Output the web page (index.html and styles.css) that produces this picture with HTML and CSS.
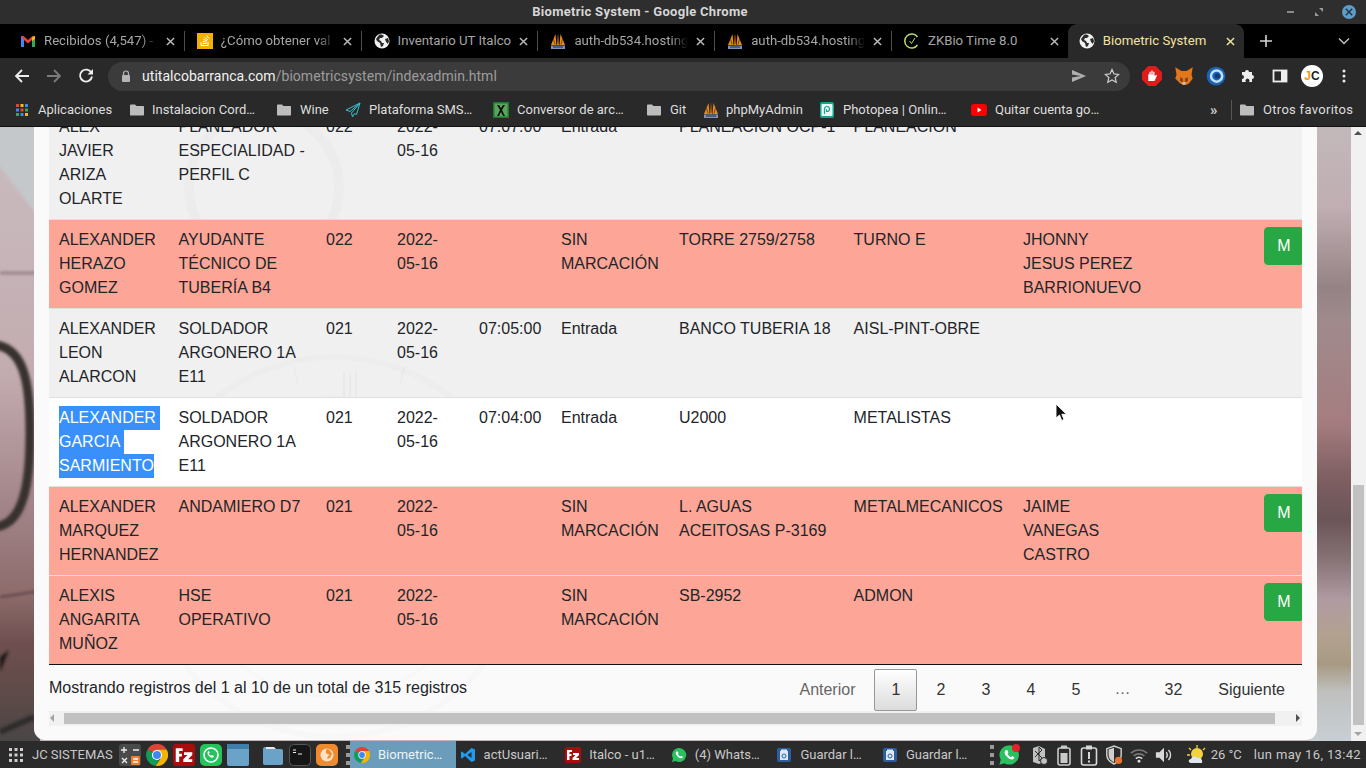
FILE: index.html
```html
<!DOCTYPE html>
<html lang="es">
<head>
    <meta charset="UTF-8">
    <title>Biometric System</title>
    <link rel="stylesheet" href="styles.css">
</head>
<body>
    <!-- iconos reutilizados -->
    <svg class="oculto" width="0" height="0">
        <symbol id="i-globo" viewBox="0 0 16 16"><circle cx="8" cy="8" r="7.5" fill="#f1f1f1"/><path d="M5 2c2-1 4 0 5 1L8 5 6 5 5 7l2 1 1 2 2 0-1 3-2 1-1-4-3-2-1-2zM11 6l3-1 1 3-1 3-2-2z" fill="#2a2a2a"/></symbol>
        <symbol id="i-cerrar" viewBox="0 0 10 10"><path d="M1 1l8 8M9 1l-8 8" stroke="currentColor" stroke-width="1.6" fill="none"/></symbol>
        <symbol id="i-velas" viewBox="0 0 16 16"><path d="M1 12L5.500 1l1 11zM7 12L8 .500 9 12zM9.500 12l1-11L15 12z" fill="#ec8a17"/><path d="M3.500 6L5 11.500M12.500 6L11 11.500M8 3v8" stroke="#5c3a12" stroke-width=".8"/><path d="M1 12.500h14V16H1z" fill="#7f93bd"/><path d="M3 14h10" stroke="#2c3a5c" stroke-width="1.200"/></symbol>
        <symbol id="i-carpeta" viewBox="0 0 16 16"><path d="M1 3.500C1 3 1.400 2.500 2 2.500h4l1.500 1.500H14c.6 0 1 .4 1 1v7.500c0 .6-.4 1-1 1H2c-.6 0-1-.4-1-1z" fill="#bdbdbd"/></symbol>
        <symbol id="i-chrome" viewBox="0 0 16 16"><path d="M8 8L1.100 4A8 8 0 0 1 15 4H8z" fill="#db4437"/><path d="M8 8l-6.900-4A8 8 0 0 0 7 15.900L11 9z" fill="#0f9d58"/><path d="M8 4h7A8 8 0 0 1 7 15.900L11 10z" fill="#f4b400"/><circle cx="8" cy="8" r="3.700" fill="#fff"/><circle cx="8" cy="8" r="2.900" fill="#4285f4"/></symbol>
        <symbol id="i-filezilla" viewBox="0 0 16 16"><rect width="16" height="16" rx="2" fill="#a80c0c"/><path d="M2 3h5v2H4.500v2H6.500v2H4.500v4H2zM8 6h6v2l-3 3h3v2H7.500v-2l3-3H8z" fill="#fff"/></symbol>
        <symbol id="i-whatsapp" viewBox="0 0 16 16"><path d="M8 1a7 7 0 0 0-6 10.500L1 15l3.600-1A7 7 0 1 0 8 1z" fill="#29c15f"/><path d="M5.500 4.500c-1 1-1 2.500.5 4.300s3 2.500 4.200 2.500c1 0 1.800-1 1.600-1.600L10.300 8.800 9.500 9.600C8.500 9.200 7.300 8 6.900 7L7.600 6.200 6.700 4.400z" fill="#fff"/></symbol>
        <symbol id="i-guardar" viewBox="0 0 16 16"><rect x="1" y="1" width="14" height="14" rx="2" fill="#2d5f9e"/><rect x="4" y="4" width="8" height="9" fill="#dfe8f2"/><rect x="5" y="2.500" width="6" height="1.500" fill="#dfe8f2"/><circle cx="8" cy="9" r="2" fill="none" stroke="#2d5f9e"/></symbol>
    </svg>

    <header class="titulo-ventana">
        <span class="titulo-texto">Biometric System - Google Chrome</span>
        <div class="botones-ventana">
            <span class="btn-min"></span>
            <svg class="btn-max" width="10" height="10" viewBox="0 0 10 10"><path d="M5 1h4v4zM5 9H1V5z" fill="#9a9a9a"/></svg>
            <span class="btn-cerrar"><svg width="8" height="8"><use href="#i-cerrar"/></svg></span>
        </div>
    </header>

    <nav class="pestanas">
        <div class="pestana">
            <svg class="icono" viewBox="0 0 16 16"><path d="M1 3h2.500L8 7l4.500-4H15v11h-3V7L8 10.500 4 7v7H1z" fill="#ea4335"/><path d="M1 3v11h3V7z" fill="#4285f4"/><path d="M15 3v11h-3V7z" fill="#34a853"/><path d="M12 4.500L15 3v3l-3 2z" fill="#fbbc05"/></svg>
            <span class="pestana-texto">Recibidos (4,547) - j</span>
            <svg class="pestana-x"><use href="#i-cerrar"/></svg>
        </div>
        <div class="pestana">
            <svg class="icono" viewBox="0 0 16 16"><rect width="16" height="16" fill="#f2b100"/><path d="M4 9v3.500h7V9M5.500 10.500h4M5.700 8.500l4 .6M6.300 6.500l3.800 1.200M7.500 4.500l3.300 2.200M9.500 2.500l2.500 3" stroke="#fff" stroke-width="1" fill="none"/></svg>
            <span class="pestana-texto">¿Cómo obtener val</span>
            <svg class="pestana-x"><use href="#i-cerrar"/></svg>
        </div>
        <div class="pestana">
            <svg class="icono"><use href="#i-globo"/></svg>
            <span class="pestana-texto pestana-corta">Inventario UT Italco</span>
            <svg class="pestana-x"><use href="#i-cerrar"/></svg>
        </div>
        <div class="pestana">
            <svg class="icono"><use href="#i-velas"/></svg>
            <span class="pestana-texto">auth-db534.hosting</span>
            <svg class="pestana-x"><use href="#i-cerrar"/></svg>
        </div>
        <div class="pestana">
            <svg class="icono"><use href="#i-velas"/></svg>
            <span class="pestana-texto">auth-db534.hosting</span>
            <svg class="pestana-x"><use href="#i-cerrar"/></svg>
        </div>
        <div class="pestana pestana-sin-linea">
            <svg class="icono" viewBox="0 0 16 16"><path d="M13.500 4A7 7 0 1 0 13.500 12" fill="none" stroke="#b5d96b" stroke-width="1.500"/><path d="M5.500 8l2 2.500L11 5" fill="none" stroke="#b5d96b" stroke-width="1"/></svg>
            <span class="pestana-texto pestana-corta">ZKBio Time 8.0</span>
            <svg class="pestana-x"><use href="#i-cerrar"/></svg>
        </div>
        <div class="pestana pestana-activa">
            <svg class="icono"><use href="#i-globo"/></svg>
            <span class="pestana-texto pestana-corta">Biometric System</span>
            <svg class="pestana-x"><use href="#i-cerrar"/></svg>
        </div>
        <svg class="pestana-mas" viewBox="0 0 12 12"><path d="M6 0v12M0 6h12" stroke="#d6d6d6" stroke-width="1.600"/></svg>
        <svg class="pestana-lista" viewBox="0 0 12 8"><path d="M1 1.500l5 5 5-5" stroke="#c4c4c4" stroke-width="1.400" fill="none"/></svg>
    </nav>

    <div class="barra-navegacion">
        <svg class="nav-icono" viewBox="0 0 16 16"><path d="M15 8H2M8 2L2 8l6 6" stroke="#ededed" stroke-width="1.800" fill="none"/></svg>
        <svg class="nav-icono" viewBox="0 0 16 16"><path d="M1 8h13M8 2l6 6-6 6" stroke="#7b7b7b" stroke-width="1.800" fill="none"/></svg>
        <svg class="nav-icono" viewBox="0 0 16 16"><path d="M13.500 5A6 6 0 1 0 14 8.500" stroke="#ededed" stroke-width="1.800" fill="none"/><path d="M15 1v5.500H9.500z" fill="#ededed"/></svg>
        <div class="omnibox">
            <svg class="candado" viewBox="0 0 10 12"><path d="M2.500 5V3.500a2.500 2.500 0 0 1 5 0V5" stroke="#b5b5b5" fill="none" stroke-width="1.200"/><rect x="1" y="5" width="8" height="7" rx="1" fill="#b5b5b5"/></svg>
            <span class="url"><b class="url-dominio">utitalcobarranca.com</b>/biometricsystem/indexadmin.html</span>
            <svg class="omni-enviar" viewBox="0 0 16 14"><path d="M1 1l14 6-14 6 0-4.500 9-1.500-9-1.500z" fill="#b0b0b0"/></svg>
            <svg class="omni-estrella" viewBox="0 0 16 16"><path d="M8 1.500l2 4.400 4.700.5-3.500 3.200 1 4.700L8 11.900l-4.200 2.400 1-4.700L1.300 6.400 6 5.900z" fill="none" stroke="#c8c8c8" stroke-width="1.300"/></svg>
        </div>
        <div class="extensiones">
            <svg class="ext ext-grande" viewBox="0 0 16 16"><path d="M5 0h6l5 5v6l-5 5H5l-5-5V5z" fill="#e01b1b"/><path d="M5 12V6.500h1V4.500h1V7h.5V3.500h1V7H9V4.500h1V8l1.500-1 .5.500-2 4.500z" fill="#fff"/></svg>
            <svg class="ext ext-grande" viewBox="0 0 16 16"><path d="M1 1l5 3h4l5-3-1 6 1 3-3 4-2 1H7l-2-1-4-4 1-3z" fill="#e2761b"/><path d="M5 9l2 1v3L5 12zM11 9l-2 1v3l2-1z" fill="#763d16"/><path d="M6.500 13h3L9 15H7z" fill="#d7c1b3"/></svg>
            <svg class="ext ext-grande" viewBox="0 0 16 16"><circle cx="8" cy="8" r="7.500" fill="#1c62b5"/><circle cx="8.500" cy="8" r="4.500" fill="none" stroke="#bfe0f6" stroke-width="2"/><circle cx="9" cy="8" r="2" fill="#123a70"/></svg>
            <svg class="ext" viewBox="0 0 16 16"><path d="M2 4h3a2 2 0 1 1 4 0h3v3a2 2 0 1 1 0 4v3H9a2 2 0 1 0-3 0H2v-3a2 2 0 1 0 0-4z" fill="#ededed"/></svg>
            <svg class="ext" viewBox="0 0 16 16"><rect x="1.500" y="2.500" width="13" height="11" fill="none" stroke="#ededed" stroke-width="1.800"/><rect x="9" y="2.500" width="5.500" height="11" fill="#ededed"/></svg>
            <span class="avatar"><span class="avatar-j">J</span><span class="avatar-c">C</span></span>
            <svg class="ext" viewBox="0 0 16 16"><circle cx="8" cy="3" r="1.500" fill="#ededed"/><circle cx="8" cy="8" r="1.500" fill="#ededed"/><circle cx="8" cy="13" r="1.500" fill="#ededed"/></svg>
        </div>
    </div>

    <div class="marcadores">
        <div class="marcador">
            <svg class="icono" viewBox="0 0 16 16"><path d="M2 2h3v3H2z" fill="#ea4335"/><path d="M6.500 2h3v3h-3z" fill="#fbbc05"/><path d="M11 2h3v3h-3z" fill="#4285f4"/><path d="M2 6.500h3v3H2z" fill="#4285f4"/><path d="M6.500 6.500h3v3h-3z" fill="#ea4335"/><path d="M11 6.500h3v3h-3z" fill="#34a853"/><path d="M2 11h3v3H2z" fill="#34a853"/><path d="M6.500 11h3v3h-3z" fill="#4285f4"/><path d="M11 11h3v3h-3z" fill="#fbbc05"/></svg>
            <span>Aplicaciones</span>
        </div>
        <div class="marcador"><svg class="icono"><use href="#i-carpeta"/></svg><span>Instalacion Cord…</span></div>
        <div class="marcador"><svg class="icono"><use href="#i-carpeta"/></svg><span>Wine</span></div>
        <div class="marcador">
            <svg class="icono" viewBox="0 0 16 16"><path d="M15 1L1 8l4 1.500L15 1 6.500 11l1 4 2-3.500 2 1z" fill="none" stroke="#38c0cc" stroke-width="1"/></svg>
            <span>Plataforma SMS…</span>
        </div>
        <div class="marcador">
            <svg class="icono" viewBox="0 0 16 16"><rect width="16" height="16" fill="#1e7a30"/><rect x="1.500" y="1.500" width="13" height="13" fill="#5ba55a"/><path d="M4 3l3 5-3 6h2l2-4 2 4h2L9 8l3-5h-2L8 6 6 3z" fill="#111"/></svg>
            <span>Conversor de arc…</span>
        </div>
        <div class="marcador"><svg class="icono"><use href="#i-carpeta"/></svg><span>Git</span></div>
        <div class="marcador"><svg class="icono"><use href="#i-velas"/></svg><span>phpMyAdmin</span></div>
        <div class="marcador">
            <svg class="icono" viewBox="0 0 16 16"><rect x="1" width="14" height="16" rx="2" fill="#19a38c"/><rect x="2.500" y="2" width="11" height="12" rx="1" fill="#e9f7f5"/><path d="M5.500 12V7a2.500 2.500 0 1 1 2.500 2.500M7.500 10V7.300" fill="none" stroke="#19a38c" stroke-width="1.200"/></svg>
            <span>Photopea | Onlin…</span>
        </div>
        <div class="marcador">
            <svg class="icono" viewBox="0 0 16 16"><rect y="2" width="16" height="12" rx="3" fill="#f00"/><path d="M6.500 5.500v5l4-2.500z" fill="#fff"/></svg>
            <span>Quitar cuenta go…</span>
        </div>
        <span class="marcador-mas">»</span>
        <span class="marcador-linea"></span>
        <div class="marcador marcador-otros"><svg class="icono"><use href="#i-carpeta"/></svg><span>Otros favoritos</span></div>
    </div>

    <main class="pagina">
        <svg class="fondo" width="1366" height="614" viewBox="0 0 1366 614">
            <defs>
                <linearGradient id="g-izq" x1="0" y1="0" x2="0" y2="1">
                    <stop offset="0" stop-color="#c9bcc0"/>
                    <stop offset=".4" stop-color="#c3acb0"/>
                    <stop offset=".63" stop-color="#a08286"/>
                    <stop offset=".76" stop-color="#8e6c6c"/>
                    <stop offset=".84" stop-color="#6f4f4f"/>
                    <stop offset=".93" stop-color="#5d4a48"/>
                    <stop offset="1" stop-color="#4a4646"/>
                </linearGradient>
                <linearGradient id="g-der" x1="0" y1="0" x2="0" y2="1">
                    <stop offset="0" stop-color="#c2b8ba"/>
                    <stop offset=".13" stop-color="#c0aeb2"/>
                    <stop offset=".26" stop-color="#958386"/>
                    <stop offset=".32" stop-color="#a08a8c"/>
                    <stop offset=".48" stop-color="#a57d80"/>
                    <stop offset=".57" stop-color="#7f5f62"/>
                    <stop offset=".64" stop-color="#6b5558"/>
                    <stop offset=".7" stop-color="#857074"/>
                    <stop offset=".77" stop-color="#b09ba2"/>
                    <stop offset=".83" stop-color="#b3a18f"/>
                    <stop offset=".875" stop-color="#a79a83"/>
                    <stop offset=".92" stop-color="#bfc0bf"/>
                    <stop offset="1" stop-color="#c8cfd4"/>
                </linearGradient>
                <filter id="borroso"><feGaussianBlur stdDeviation="1.500"/></filter>
            </defs>
            <rect x="0" y="0" width="40" height="614" fill="url(#g-izq)"/>
            <rect x="1310" y="0" width="56" height="614" fill="url(#g-der)"/>
            <g filter="url(#borroso)">
                <path d="M-6 0H40V92L-6 32z" fill="#c4c8cb"/>
                <path d="M0 146H40" stroke="#8f7a7f" stroke-width="2.500"/>
                <path d="M-4 218C26 222 30 262 30 306C30 356 24 396 -4 400" fill="none" stroke="#38302f" stroke-width="9"/>
                <path d="M0 470L40 464" stroke="#5a4142" stroke-width="2"/>
                <path d="M0 545L9 523 0 530z" fill="#1d1515"/>
                <path d="M0 605L34 590" stroke="#2f2b2b" stroke-width="6"/>
            </g>
        </svg>

        <section class="tarjeta">
            <svg class="reloj" width="1283" height="613" viewBox="0 0 1283 613">
                <circle cx="300" cy="420" r="190" fill="none" stroke="#000" stroke-opacity=".012" stroke-width="6"/>
                <circle cx="300" cy="420" r="150" fill="none" stroke="#000" stroke-opacity=".01" stroke-width="3"/>
                <circle cx="230" cy="60" r="75" fill="none" stroke="#000" stroke-opacity=".015" stroke-width="10"/>
                <path d="M310 245v28M316 245v28M322 245v28M260 240l4 18M370 240l-4 18" stroke="#000" stroke-opacity=".025" stroke-width="2"/>
            </svg>

            <div class="tabla-marco">
                <table class="tabla">
                    <colgroup>
                        <col class="c-nombre"><col class="c-cargo"><col class="c-turno"><col class="c-fecha"><col class="c-hora">
                        <col class="c-tipo"><col class="c-lugar"><col class="c-area"><col class="c-jefe"><col class="c-vacio"><col class="c-accion">
                    </colgroup>
                    <tbody>
                        <tr class="fila-par">
                            <td>ALEX JAVIER ARIZA OLARTE</td><td>PLANEADOR ESPECIALIDAD - PERFIL C</td><td>022</td><td>2022-05-16</td><td>07:07:00</td>
                            <td>Entrada</td><td class="sin-corte">PLANEACION OCP-1</td><td>PLANEACION</td><td></td><td></td><td></td>
                        </tr>
                        <tr class="fila-alerta">
                            <td>ALEXANDER HERAZO GOMEZ</td><td>AYUDANTE TÉCNICO DE TUBERÍA B4</td><td>022</td><td>2022-05-16</td><td></td>
                            <td>SIN MARCACIÓN</td><td>TORRE 2759/2758</td><td>TURNO E</td><td>JHONNY JESUS PEREZ BARRIONUEVO</td><td></td><td><button class="btn-m">M</button></td>
                        </tr>
                        <tr class="fila-par">
                            <td>ALEXANDER LEON ALARCON</td><td>SOLDADOR ARGONERO 1A E11</td><td>021</td><td>2022-05-16</td><td>07:05:00</td>
                            <td>Entrada</td><td>BANCO TUBERIA 18</td><td>AISL-PINT-OBRE</td><td></td><td></td><td></td>
                        </tr>
                        <tr class="fila-blanca">
                            <td><span class="seleccion">ALEXANDER</span><span class="seleccion">GARCIA</span><span class="seleccion sin-espacio">SARMIENTO</span></td><td>SOLDADOR ARGONERO 1A E11</td><td>021</td><td>2022-05-16</td><td>07:04:00</td>
                            <td>Entrada</td><td>U2000</td><td>METALISTAS</td><td></td><td></td><td></td>
                        </tr>
                        <tr class="fila-alerta">
                            <td>ALEXANDER MARQUEZ HERNANDEZ</td><td>ANDAMIERO D7</td><td>021</td><td>2022-05-16</td><td></td>
                            <td>SIN MARCACIÓN</td><td>L. AGUAS ACEITOSAS P-3169</td><td>METALMECANICOS</td><td>JAIME VANEGAS CASTRO</td><td></td><td><button class="btn-m">M</button></td>
                        </tr>
                        <tr class="fila-alerta">
                            <td>ALEXIS ANGARITA MUÑOZ</td><td>HSE OPERATIVO</td><td>021</td><td>2022-05-16</td><td></td>
                            <td>SIN MARCACIÓN</td><td>SB-2952</td><td>ADMON</td><td></td><td></td><td><button class="btn-m">M</button></td>
                        </tr>
                    </tbody>
                </table>
            </div>

            <div class="tabla-pie">
                <span class="info">Mostrando registros del 1 al 10 de un total de 315 registros</span>
                <div class="paginacion">
                    <a class="pag pag-apagado">Anterior</a>
                    <a class="pag pag-actual">1</a>
                    <a class="pag">2</a>
                    <a class="pag">3</a>
                    <a class="pag">4</a>
                    <a class="pag">5</a>
                    <span class="pag pag-apagado pag-puntos">…</span>
                    <a class="pag">32</a>
                    <a class="pag">Siguiente</a>
                </div>
            </div>

            <div class="scroll-h">
                <span class="flecha flecha-izq"></span>
                <span class="scroll-h-barra"></span>
                <span class="flecha flecha-der"></span>
            </div>
        </section>

        <aside class="scroll-v">
            <span class="flecha flecha-arriba"></span>
            <span class="scroll-v-barra"></span>
            <span class="flecha flecha-abajo"></span>
        </aside>

        <svg class="cursor" width="13" height="19" viewBox="0 0 13 19"><path d="M1 1v14l3.500-3 2.200 5.500 2.300-1-2.200-5.200H11.500z" fill="#111" stroke="#fff" stroke-width=".9"/></svg>
    </main>

    <footer class="tareas">
        <svg class="tareas-menu" viewBox="0 0 14 14"><g fill="#cfcfcf"><rect width="3" height="3"/><rect x="5.500" width="3" height="3"/><rect x="11" width="3" height="3"/><rect y="5.500" width="3" height="3"/><rect x="5.500" y="5.500" width="3" height="3"/><rect x="11" y="5.500" width="3" height="3"/><rect y="11" width="3" height="3"/><rect x="5.500" y="11" width="3" height="3"/><rect x="11" y="11" width="3" height="3"/></g></svg>
        <span class="tareas-nombre">JC SISTEMAS</span>
        <div class="lanzador">
            <svg class="lanza" viewBox="0 0 22 22"><rect width="22" height="22" rx="3" fill="#4a4a4a"/><rect x="12" y="12" width="9" height="9" rx="1" fill="#ef7f2c"/><path d="M5 3v6M2 6h6M14 6h6M3 14l5 5M8 14l-5 5" stroke="#eee" stroke-width="1.300"/><path d="M14 15h5M14 18h5" stroke="#fff" stroke-width="1.300"/></svg>
            <svg class="lanza" viewBox="0 0 16 16"><use href="#i-chrome"/></svg>
            <svg class="lanza" viewBox="0 0 16 16"><use href="#i-filezilla"/></svg>
            <svg class="lanza" viewBox="0 0 22 22"><rect width="22" height="22" rx="5" fill="#25c35c"/><circle cx="11" cy="11" r="7" fill="none" stroke="#fff" stroke-width="1.600"/><path d="M8 7.500c-1 1-.5 3 1 4.500s3.500 2.200 4.500 1.200l.5-1.200-2-1-.8.800c-1-.3-2-1.300-2.300-2.300l.8-.8-1-2z" fill="#fff"/></svg>
            <svg class="lanza" viewBox="0 0 22 22"><rect width="22" height="22" rx="2" fill="#6ba3c8"/><rect width="22" height="5" fill="#3f7ea8"/></svg>
            <svg class="lanza lanza-separada" viewBox="0 0 22 22"><path d="M1 5c0-1 .5-2 2-2h6l2 2h8c1.500 0 2 1 2 2v12c0 1-.5 2-2 2H3c-1.500 0-2-1-2-2z" fill="#6ba3c8"/><path d="M4 3h8l2 2H4z" fill="#e8e8e8"/></svg>
            <svg class="lanza" viewBox="0 0 22 22"><rect x=".5" y=".5" width="21" height="21" rx="4" fill="#161616" stroke="#555"/><path d="M4 6h3M4 8.500h3" stroke="#eee"/><path d="M9 10h4" stroke="#eee"/></svg>
            <svg class="lanza" viewBox="0 0 22 22"><rect width="22" height="22" rx="5" fill="#ef8a2e"/><circle cx="11" cy="11" r="6.500" fill="#fbe3c8"/><path d="M11 5c-2 2-1 4 0 5l3 1-2 1-1 3 3-1 2-4c-1-3-3-5-5-5z" fill="#ef8a2e"/></svg>
            <span class="lanza-puntos"></span>
        </div>
        <div class="lista-tareas">
            <div class="tarea tarea-activa"><svg class="icono"><use href="#i-chrome"/></svg><span>Biometric…</span></div>
            <div class="tarea"><svg class="icono" viewBox="0 0 16 16"><path d="M11.500 1L15 2.500v11L11.500 15 5 9 2 11.500 1 11V5l1-.5L5 7z" fill="#1f9cf0"/><path d="M11.500 5L7.500 8l4 3z" fill="#2c2c2c"/></svg><span>actUsuari…</span></div>
            <div class="tarea"><svg class="icono"><use href="#i-filezilla"/></svg><span>Italco - u1…</span></div>
            <div class="tarea"><svg class="icono"><use href="#i-whatsapp"/></svg><span>(4) Whats…</span></div>
            <div class="tarea"><svg class="icono"><use href="#i-guardar"/></svg><span>Guardar l…</span></div>
            <div class="tarea"><svg class="icono"><use href="#i-guardar"/></svg><span>Guardar l…</span></div>
        </div>
        <div class="bandeja">
            <span class="lanza-puntos"></span>
            <span class="bandeja-wa"><svg width="22" height="22"><use href="#i-whatsapp"/></svg><span class="punto-rojo"></span></span>
            <svg class="tray" viewBox="0 0 18 22"><path d="M3 4l6-2 6 3v12l-6 3-6-2z" fill="#d0d0d0" opacity=".9"/><path d="M5 7l7 7-3 3V3l3 3-7 7" stroke="#2c2c2c" fill="none"/><circle cx="14" cy="17" r="3.500" fill="#c5c5c5" stroke="#2c2c2c"/></svg>
            <svg class="tray" viewBox="0 0 18 22"><rect x="3" y="4" width="12" height="17" rx="2" fill="none" stroke="#c9c9c9" stroke-width="1.600"/><rect x="6" y="1.500" width="6" height="3" fill="#c9c9c9"/><rect x="5.500" y="9" width="7" height="10" fill="#c9c9c9"/></svg>
            <svg class="tray" viewBox="0 0 18 22"><rect x="1.500" y="4" width="15" height="17" rx="2" fill="none" stroke="#d8d8d8" stroke-width="1.600"/><rect x="6" y="1.500" width="6" height="4" fill="#d8d8d8"/><path d="M9 8v7M9 16.500v2" stroke="#d8d8d8" stroke-width="2"/></svg>
            <svg class="tray" viewBox="0 0 20 22"><path d="M10 1l8 3v7c0 5-4 8-8 10-4-2-8-5-8-10V4z" fill="none" stroke="#d0d0d0" stroke-width="1.600"/><path d="M10 3v16c-3-1.500-6-4-6-8V5z" fill="#d0d0d0"/><circle cx="15" cy="17" r="4" fill="#e9742b"/></svg>
            <svg class="tray" viewBox="0 0 20 22"><path d="M1 9a13 13 0 0 1 18 0M4 12a9 9 0 0 1 12 0" stroke="#777" stroke-width="1.800" fill="none"/><path d="M6.500 15a5 5 0 0 1 7 0" stroke="#ddd" stroke-width="1.800" fill="none"/><circle cx="10" cy="18" r="1.600" fill="#ddd"/></svg>
            <svg class="tray" viewBox="0 0 20 22"><path d="M1 8h4l5-5v16l-5-5H1z" fill="#d8d8d8"/><path d="M12.500 8c1.500 1.500 1.500 4.500 0 6M15 5.500c3 3 3 8 0 11" stroke="#d8d8d8" stroke-width="1.600" fill="none"/></svg>
            <svg class="clima" viewBox="0 0 20 20"><circle cx="10" cy="9" r="6" fill="#f3d23e"/><path d="M10 0v3M2 3l2 2M18 3l-2 2M0 10h3" stroke="#f3d23e" stroke-width="1.300"/><path d="M4 18c-3 0-3-4 0-4 1-3 5-3 6-1 3-1 6 1 5 5z" fill="#dfe6ec"/></svg>
            <span class="temp">26 °C</span>
            <span class="reloj-texto">lun may 16, 13:42</span>
        </div>
    </footer>
</body>
</html>
```

FILE: styles.css
```css
* {
    box-sizing: border-box;
}

html, body {
    margin: 0;
    height: 768px;
    overflow: hidden;
}

body {
    display: flex;
    flex-direction: column;
    background: #2a2a2a;
    font-family: "Liberation Sans", Arial, sans-serif;
    font-size: 16px;
    line-height: 24px;
    color: #212529;
}

.oculto {
    position: absolute;
}

.icono {
    width: 16px;
    height: 16px;
    flex: none;
}

/* Barra de titulo */
.titulo-ventana {
    height: 24px;
    display: flex;
    align-items: center;
    justify-content: center;
    background: #2e2e2e;
    position: relative;
    padding-right: 86px;
}

.titulo-texto {
    font: 700 13px/24px Roboto, sans-serif;
    letter-spacing: .3px;
    color: #d6d6d6;
}

.botones-ventana {
    position: absolute;
    right: 10px;
    top: 0;
    height: 24px;
    display: flex;
    align-items: center;
    gap: 18px;
}

.btn-min {
    width: 7px;
    height: 2px;
    margin-right: 2px;
    background: #8a8a8a;
}

.btn-cerrar {
    width: 14px;
    height: 14px;
    border-radius: 50%;
    background: #5c9cc9;
    color: #20303c;
    display: flex;
    align-items: center;
    justify-content: center;
}

/* Pestanas */
.pestanas {
    height: 34px;
    background: #000;
    display: flex;
    padding-left: 8px;
    font: 13px/34px Roboto, sans-serif;
    position: relative;
}

.pestana {
    width: 176.800px;
    flex: none;
    display: flex;
    align-items: center;
    padding: 0 9px 0 12px;
    gap: 8px;
    color: #a6a6a6;
    border-right: 1px solid #4d4d4d;
    border-image: linear-gradient(transparent 8px, #4d4d4d 8px, #4d4d4d 26px, transparent 26px) 1;
}

.pestana-sin-linea {
    border-right-color: transparent;
    border-image: none;
}

.pestana-texto {
    flex: 1;
    white-space: nowrap;
    overflow: hidden;
    font-size: 13.200px;
    -webkit-mask-image: linear-gradient(to right, #000 85%, transparent 100%);
    mask-image: linear-gradient(to right, #000 85%, transparent 100%);
}

.pestana-corta {
    -webkit-mask-image: none;
    mask-image: none;
}

.pestana-x {
    width: 9px;
    height: 9px;
    flex: none;
    color: #bcbcbc;
}

.pestana-activa {
    width: 176px;
    margin-left: -1px;
    background: #292929;
    border: 0;
    border-image: none;
    border-radius: 9px 9px 0 0;
    color: #f3e3a0;
    padding-left: 11px;
}

.pestana-activa .pestana-x {
    color: #f3e3a0;
}

.pestana-mas {
    width: 12px;
    height: 12px;
    margin: 11px 0 0 16px;
}

.pestana-lista {
    width: 12px;
    height: 8px;
    margin: 13px 0 0 66px;
}

/* Barra de navegacion */
.barra-navegacion {
    height: 36px;
    background: #292929;
    display: flex;
    align-items: center;
    padding: 0 0 0 14px;
}

.nav-icono {
    width: 16px;
    height: 16px;
    flex: none;
    margin-right: 16px;
}

.omnibox {
    width: 1022px;
    height: 29px;
    margin-left: -2px;
    border-radius: 15px;
    background: #3b3b3b;
    display: flex;
    align-items: center;
    padding: 0 10px 0 13px;
}

.candado {
    width: 10px;
    height: 12px;
    flex: none;
}

.url {
    margin-left: 11px;
    font: 14px/29px Roboto, sans-serif;
    letter-spacing: .04px;
    color: #9d9d9d;
    flex: 1;
}

.url-dominio {
    font-weight: 400;
    color: #f2f2f2;
}

.omni-enviar {
    width: 16px;
    height: 14px;
    margin-right: 17px;
}

.omni-estrella {
    width: 16px;
    height: 16px;
}

.extensiones {
    display: flex;
    align-items: center;
    gap: 16px;
    margin-left: 14px;
}

.ext {
    width: 16px;
    height: 16px;
    flex: none;
}

.ext-grande {
    width: 20px;
    height: 20px;
    margin: 0 -2px;
}

.avatar {
    width: 22px;
    height: 22px;
    margin: 0 -3px;
    border-radius: 50%;
    background: #fff;
    display: flex;
    align-items: center;
    justify-content: center;
    font: 700 12px/22px "Liberation Sans", sans-serif;
}

.avatar-j {
    color: #e8a11c;
}

.avatar-c {
    color: #222;
}

/* Marcadores */
.marcadores {
    height: 33px;
    background: #292929;
    border-bottom: 1px solid #111;
    display: flex;
    align-items: center;
    padding-left: 14px;
    font: 13px/32px Roboto, sans-serif;
    color: #dedede;
}

.marcador {
    display: flex;
    align-items: center;
    gap: 8px;
    flex: none;
    white-space: nowrap;
}

.marcador:nth-child(1) { width: 115px; }
.marcador:nth-child(2) { width: 147px; gap: 7px; }
.marcador:nth-child(3) { width: 69px; }
.marcador:nth-child(4) { width: 148px; }
.marcador:nth-child(5) { width: 153px; }
.marcador:nth-child(6) { width: 57px; }
.marcador:nth-child(7) { width: 116px; gap: 7px; }
.marcador:nth-child(8) { width: 152px; }
.marcador:nth-child(9) { width: 239px; }

.marcador-mas {
    width: 13px;
    font-size: 15px;
    font-weight: 700;
    color: #d0d0d0;
}

.marcador-linea {
    width: 1px;
    height: 20px;
    margin: 0 7px 0 8px;
    background: #555;
}

.marcador-otros {
    letter-spacing: .3px;
}

/* Contenido */
.pagina {
    position: relative;
    height: 614px;
    display: flex;
    overflow: hidden;
    background: #c4b2b5;
}

.fondo {
    position: absolute;
    left: 0;
    top: 0;
}

.cursor {
    position: absolute;
    left: 1055px;
    top: 276px;
}

.tarjeta {
    position: relative;
    width: 1283px;
    height: 613px;
    margin-left: 34px;
    padding: 0 15px;
    background: #fbfafa;
    border-radius: 0 0 11px 11px;
    overflow: hidden;
}

.reloj {
    position: absolute;
    left: 0;
    top: 0;
}

.tabla-marco {
    position: relative;
    overflow: hidden;
    height: 538px;
    border-bottom: 1px solid #111;
}

.tabla {
    table-layout: fixed;
    border-collapse: separate;
    border-spacing: 0;
    width: 1313px;
    margin-top: -21px;
}

.c-nombre { width: 119.500px; }
.c-cargo { width: 147.500px; }
.c-turno { width: 71px; }
.c-fecha { width: 82px; }
.c-hora { width: 82px; }
.c-tipo { width: 118px; }
.c-lugar { width: 174.600px; }
.c-area { width: 169.400px; }
.c-jefe { width: 138px; }
.c-vacio { width: 103px; }
.c-accion { width: 108px; }

.tabla td {
    padding: 8px 10px;
    border-top: 1px solid #e0e0e0;
    vertical-align: top;
}

.tabla .sin-corte {
    white-space: nowrap;
}

.fila-par {
    background: rgba(0, 0, 0, 0.04);
}

.fila-blanca {
    background: #fff;
}

.fila-alerta {
    background: #fda596;
}

.seleccion {
    display: block;
    width: fit-content;
    padding-right: 4px;
    background: #3a90fb;
    color: #fff;
}

.sin-espacio {
    padding-right: 0;
}

.btn-m {
    display: block;
    width: 40px;
    height: 38px;
    margin-top: -1px;
    padding: 0;
    border: 1px solid #28a745;
    border-radius: 4px;
    background: #28a745;
    color: #fff;
    font: 16px/24px "Liberation Sans", sans-serif;
}

.tabla-pie {
    position: relative;
    height: 46px;
    display: flex;
    justify-content: space-between;
    padding-right: 0;
}

.info {
    padding-top: 11px;
}

.paginacion {
    display: flex;
    padding-top: 4px;
    color: #333;
}

.pag {
    height: 42px;
    min-width: 43px;
    margin-left: 2px;
    padding: 8px 16px;
    border: 1px solid transparent;
    border-radius: 2px;
    text-align: center;
    white-space: nowrap;
}

.pag-apagado {
    color: #666;
}

.pag-puntos {
    padding: 8px 15px;
    border: 0;
}

.pag-actual {
    border-color: #979797;
    background: linear-gradient(#fff, #dcdcdc);
}

.scroll-h {
    position: relative;
    height: 15px;
    display: flex;
    align-items: center;
    background: #f1f1f1;
}

.scroll-h-barra {
    width: 1211px;
    height: 11px;
    margin-left: 15px;
    background: #c1c1c1;
}

.flecha {
    position: absolute;
    width: 0;
    height: 0;
    border: 4px solid transparent;
}

.flecha-izq {
    left: 1px;
    top: 3px;
    border-right-color: #a3a3a3;
    border-left-width: 0;
}

.flecha-der {
    right: 2px;
    top: 3px;
    border-left-color: #505050;
    border-right-width: 0;
}

/* Scroll de la ventana */
.scroll-v {
    position: relative;
    width: 15px;
    margin-left: 34px;
    background: #f1f1f1;
}

.scroll-v-barra {
    position: absolute;
    left: 2px;
    top: 358px;
    width: 11px;
    height: 240px;
    background: #c1c1c1;
}

.flecha-arriba {
    left: 3px;
    top: 4px;
    border-bottom-color: #505050;
    border-top-width: 0;
}

.flecha-abajo {
    left: 3px;
    bottom: 5px;
    border-top-color: #a3a3a3;
    border-bottom-width: 0;
}

/* Barra de tareas */
.tareas {
    height: 27px;
    background: #2b2b2b;
    display: flex;
    align-items: center;
    font: 13px/27px Roboto, sans-serif;
    color: #c9c9c9;
    padding-left: 9px;
}

.tareas-menu {
    width: 14px;
    height: 14px;
    flex: none;
}

.tareas-nombre {
    width: 87px;
    margin-left: 9px;
    white-space: nowrap;
}

.lanzador {
    display: flex;
    align-items: center;
    gap: 5px;
    margin-left: 0;
}

.lanza {
    width: 22px;
    height: 22px;
    flex: none;
}

.lanza-separada {
    margin-left: 8px;
}

.lanza-puntos {
    width: 4px;
    height: 20px;
    flex: none;
    margin-left: 3px;
    background: repeating-linear-gradient(#9a9a9a 0 4px, transparent 4px 8px);
}

.lista-tareas {
    display: flex;
}

.tarea {
    width: 105.600px;
    height: 27px;
    display: flex;
    align-items: center;
    gap: 8px;
    padding-left: 4px;
    white-space: nowrap;
}

.tarea-activa {
    background: #6b9dbb;
    color: #eef4f8;
}

.bandeja {
    display: flex;
    align-items: center;
    gap: 7px;
    margin-left: auto;
    padding-right: 5px;
}

.bandeja-wa {
    position: relative;
    width: 22px;
    height: 22px;
    margin: 0 3px 0 -3px;
}

.punto-rojo {
    position: absolute;
    right: 0;
    top: 0;
    width: 8px;
    height: 8px;
    border-radius: 50%;
    background: #e4202a;
}

.tray {
    width: 18px;
    height: 22px;
    flex: none;
}

.clima {
    width: 20px;
    height: 20px;
    flex: none;
    margin-left: 7px;
}

.temp {
    margin-left: -3px;
}

.reloj-texto {
    margin-left: 5px;
    letter-spacing: .35px;
    white-space: nowrap;
}
```
